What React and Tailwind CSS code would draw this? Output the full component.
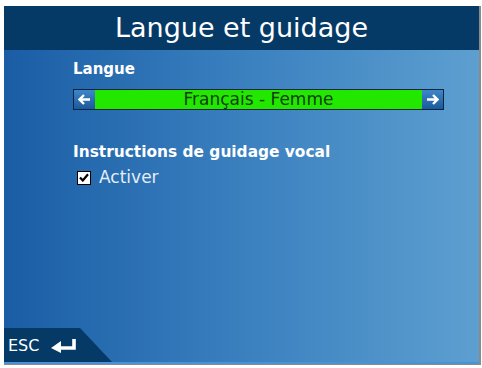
import React from "react";

export default function App() {
  const font = { fontFamily: '"DejaVu Sans", Verdana, sans-serif' };
  return (
    <div className="w-[482px] h-[368px] bg-white overflow-hidden" style={font}>
      <div className="ml-[4px] mt-[6px] w-[477px] h-[359px] flex flex-col border-r-2 border-b border-[#8a8a8a]">
        <div className="h-[44px] bg-[#063a66] flex items-center justify-center">
          <span className="text-white text-[27px] leading-none pb-[2px]">
            Langue et guidage
          </span>
        </div>
        <div className="flex-1 relative flex flex-col bg-gradient-to-r from-[#1a5da5] via-[#3a80bf] to-[#5d9fd0]">
          <div className="pl-[69px] pr-[35px] pt-[10px] flex flex-col">
            <div className="text-white font-bold text-[15px] leading-[18px]">Langue</div>
            <div className="mt-[11px] h-[21px] flex border border-[#0b2540] bg-[#22e800]">
              <div className="w-[21px] h-full bg-gradient-to-b from-[#3f86c8] to-[#1b5a9c] flex items-center justify-center">
                <svg width="13" height="11" viewBox="0 0 13 11">
                  <path d="M6 1 L1.5 5.5 L6 10 M1.5 5.5 H12" stroke="white" strokeWidth="2.4" fill="none" strokeLinejoin="miter" />
                </svg>
              </div>
              <div className="flex-1 flex items-center justify-center text-[#123f0c] text-[17px] leading-none">
                Français - Femme
              </div>
              <div className="w-[21px] h-full bg-gradient-to-b from-[#3f86c8] to-[#1b5a9c] flex items-center justify-center">
                <svg width="13" height="11" viewBox="0 0 13 11">
                  <path d="M7 1 L11.5 5.5 L7 10 M11.5 5.5 H1" stroke="white" strokeWidth="2.4" fill="none" strokeLinejoin="miter" />
                </svg>
              </div>
            </div>
            <div className="mt-[33px] text-white font-bold text-[15.4px] leading-[19px]">Instructions de guidage vocal</div>
            <div className="mt-[7px] flex items-center gap-[8px] pl-[4px]">
              <div className="w-[14px] h-[14px] bg-white border border-black flex items-center justify-center">
                <svg width="10" height="9" viewBox="0 0 10 9">
                  <path d="M1 4.5 L3.8 7.5 L9 1.2" stroke="black" strokeWidth="2.2" fill="none" />
                </svg>
              </div>
              <span className="text-[#e4eef8] text-[17px] leading-none">Activer</span>
            </div>
          </div>
          <div className="mt-auto h-[34px] flex items-end">
            <div className="relative h-[34px] w-[108px]">
              <svg className="absolute inset-0" width="108" height="34" viewBox="0 0 108 34">
                <polygon points="0,0 76,0 108,34 0,34" fill="#063a66" />
              </svg>
              <div className="relative h-full flex items-center pl-[4px] pt-[2px] gap-[12px]">
                <span className="text-white text-[16px] leading-none">ESC</span>
                <svg width="26" height="14" viewBox="0 0 26 14">
                  <path d="M23 0 V9 H7" stroke="white" strokeWidth="3.6" fill="none" />
                  <polygon points="0,9 10,2 10,14" fill="white" />
                </svg>
              </div>
            </div>
          </div>
          <div className="h-[2px] bg-[#4a92d8]"></div>
        </div>
      </div>
    </div>
  );
}
